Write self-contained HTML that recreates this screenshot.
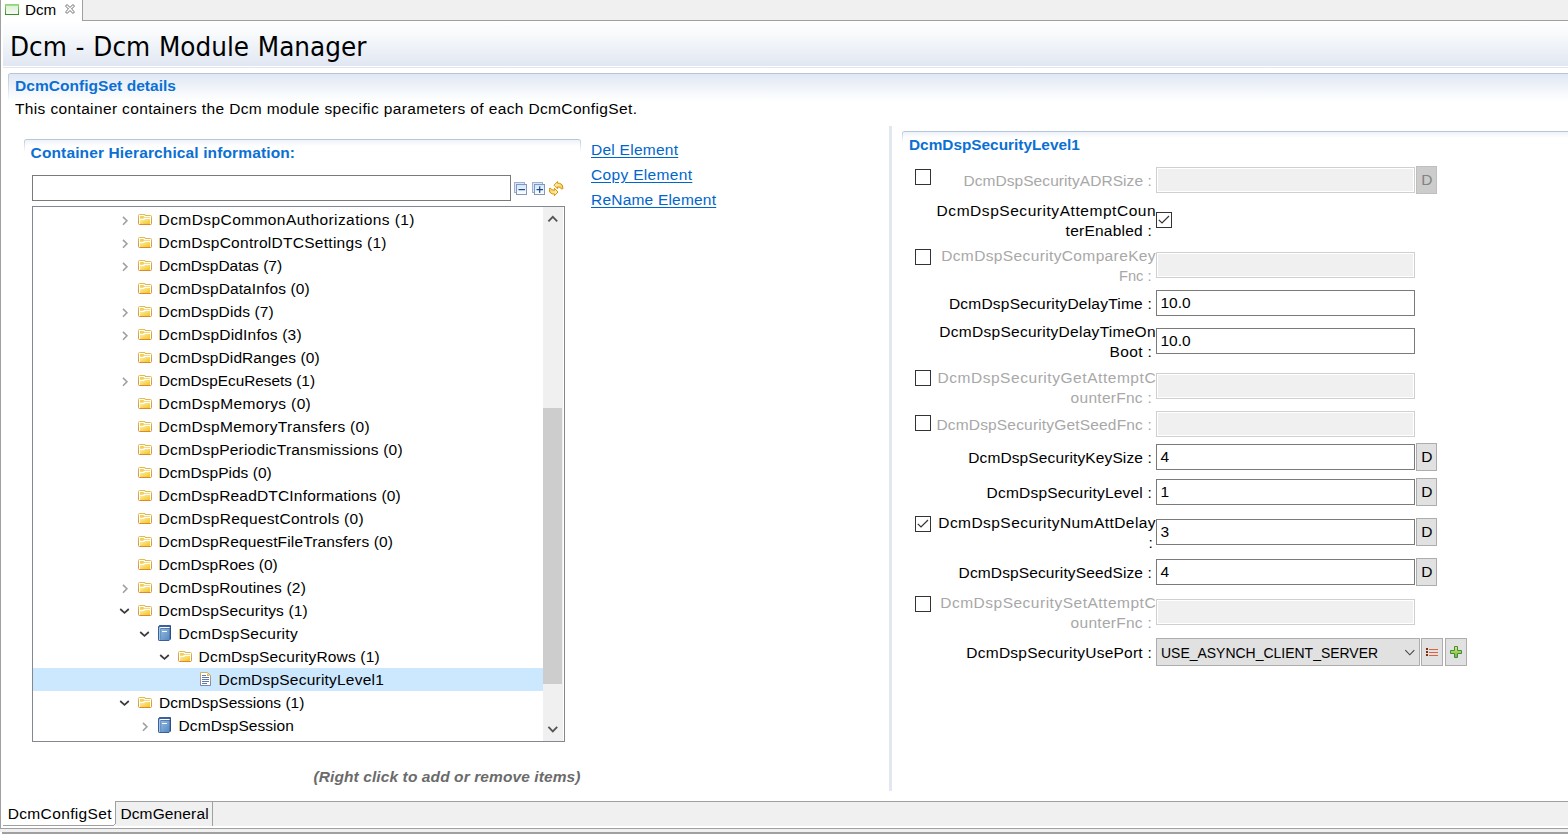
<!DOCTYPE html>
<html><head><meta charset="utf-8"><title>Dcm</title>
<style>
html,body{margin:0;padding:0;}
body{width:1568px;height:834px;position:relative;overflow:hidden;background:#fff;font-family:"Liberation Sans","DejaVu Sans",sans-serif;font-size:15.5px;color:#000;}
.a{position:absolute;}
.t{position:absolute;white-space:pre;line-height:20px;height:20px;}
.b{color:#0a70d4;}
.lk{color:#0066cc;text-decoration:underline;text-underline-offset:2px;}
.in{border:1px solid #7a7a7a;background:#fff;}
.ind{border:1px solid #cfcfcf;background:#f0f0f0;box-shadow:inset 0 0 0 1px #fff;}
#tabbar{left:0;top:0;width:1568px;height:20px;background:#f0f0f0;border-bottom:1px solid #a0a0a0;}
#tab{left:1px;top:0;width:81px;height:21px;background:#fff;border-right:1px solid #a0a0a0;}
#leftedge{left:0;top:0;width:1px;height:829px;background:#a0a0a0;}
#head{left:3px;top:21px;width:1565px;height:45px;background:linear-gradient(#ffffff 0%,#f8fafc 28%,#e1e7f2 100%);}
#headline{left:3px;top:67px;width:1565px;height:1px;background:#dfe6f0;}
#sec1{left:8px;top:73px;width:1570px;height:27px;border-top:1px solid #b3c6dd;border-radius:3px 0 0 0;background:linear-gradient(#b9cadf,rgba(255,255,255,0)) left top/1px 100% no-repeat,linear-gradient(#e1e8f3 0%,#f1f5fa 55%,#ffffff 100%);}
#sec2{left:24px;top:139px;width:557px;height:12px;border-top:1px solid #b5c8df;border-radius:3px 3px 0 0;background:linear-gradient(#b9cadf,rgba(255,255,255,0)) left top/1px 100% no-repeat,linear-gradient(#b9cadf,rgba(255,255,255,0)) right top/1px 100% no-repeat,linear-gradient(#eef2f8 0%,#ffffff 6px);}
#sec3{left:902px;top:131px;width:680px;height:10px;border-top:1px solid #b3c6dd;border-radius:3px 0 0 0;background:linear-gradient(#b9cadf,rgba(255,255,255,0)) left top/1px 100% no-repeat,linear-gradient(#eef2f8 0%,#ffffff 6px);}
#sash{left:889px;top:126px;width:3px;height:665px;background:#e1e8f2;}
#filter{left:32px;top:175px;width:477px;height:24px;}
#tree{left:32px;top:206px;width:531px;height:534px;border:1px solid #828790;background:#fff;}
#sbtrack{left:543px;top:207px;width:20px;height:534px;background:#f0f0f0;}
#sbthumb{left:543px;top:408px;width:19px;height:276px;background:#cdcdcd;}
#btabbar{left:1px;top:801px;width:1567px;height:24px;background:#f0f0f0;border-top:1px solid #a0a0a0;}
#btab1{left:1px;top:801px;width:114px;height:27px;background:#fff;}#btab1r{left:115px;top:802px;width:1px;height:22px;background:#a0a0a0;}#bline{left:0;top:828px;width:1568px;height:1px;background:#a0a0a0;}
#btab1l{left:3px;top:825px;width:111px;height:1px;background:#a0a0a0;}
#btab2r{left:212px;top:802px;width:1px;height:24px;background:#a0a0a0;}
#bot1{left:0;top:829px;width:1568px;height:3px;background:#f0f0f0;}
#bot2{left:2px;top:832px;width:1566px;height:2px;background:#a0a0a0;}
</style></head><body>
<svg width="0" height="0" style="position:absolute">
<defs>
<linearGradient id="fb" x1="0" y1="0" x2="0" y2="1"><stop offset="0" stop-color="#e2bd4e"/><stop offset="1" stop-color="#e0882e"/></linearGradient>
<linearGradient id="ff" x1="0" y1="0" x2="1" y2="1"><stop offset="0" stop-color="#fbeeb0"/><stop offset="1" stop-color="#f2c71c"/></linearGradient>
<linearGradient id="bk" x1="0" y1="0" x2="1" y2="1"><stop offset="0" stop-color="#a6c6e2"/><stop offset="1" stop-color="#4f86c2"/></linearGradient>
<linearGradient id="dg" x1="0" y1="0" x2="0" y2="1"><stop offset="0" stop-color="#cdb264"/><stop offset="1" stop-color="#7a84b0"/></linearGradient>
<linearGradient id="sq" x1="0" y1="0" x2="0" y2="1"><stop offset="0" stop-color="#cfe6ff"/><stop offset="1" stop-color="#ffffff"/></linearGradient>
<linearGradient id="pg" x1="0" y1="0" x2="0" y2="1"><stop offset="0" stop-color="#e6ea72"/><stop offset="1" stop-color="#6cb03c"/></linearGradient>
<linearGradient id="sy" x1="0" y1="0" x2="1" y2="1"><stop offset="0" stop-color="#fffbe0"/><stop offset="1" stop-color="#f3c83c"/></linearGradient>
<linearGradient id="tg" x1="0" y1="0" x2="0" y2="1"><stop offset="0" stop-color="#8fd878"/><stop offset="1" stop-color="#3a8c2c"/></linearGradient>
<linearGradient id="tf" x1="0" y1="0" x2="0" y2="1"><stop offset="0" stop-color="#d9eed2"/><stop offset="1" stop-color="#f7fcf5"/></linearGradient>
<symbol id="folder" viewBox="0 0 14 11">
<path d="M0.5 1.5 Q0.5 0.5 1.5 0.5 H7 V1.5 H12.5 Q13.5 1.5 13.5 2.5 V9.5 Q13.5 10.5 12.5 10.5 H1.5 Q0.5 10.5 0.5 9.5 Z" fill="#fff" stroke="url(#fb)"/>
<path d="M2 2 H5.5 L6.5 3 H12 V3.8 H6.2 L5.2 4.7 H2 Z" fill="#f3cf5c"/>
<path d="M2 6 H6 L7 5 H12 V10 H2 Z" fill="url(#ff)"/>
</symbol>
<symbol id="book" viewBox="0 0 13 16">
<path d="M1.5 0.5 H12.5 V14 L11 15.5 H1.2 Q0.5 15.5 0.5 14.8 V1.5 Z" fill="url(#bk)" stroke="#3b5f9c"/>
<rect x="1" y="0.5" width="11.5" height="1.6" fill="#3b62a2"/>
<rect x="2.2" y="2" width="10" height="1" fill="#fff"/>
<rect x="2.2" y="3" width="10" height="0.8" fill="#4a74b2"/>
<rect x="1" y="3" width="1.4" height="12" fill="#a4c8e4"/>
<rect x="2.4" y="3.8" width="0.7" height="11" fill="#4d7cb8"/>
<rect x="4" y="6" width="5" height="1" fill="#fff"/>
<rect x="11.7" y="1" width="1.1" height="13.2" fill="#2c4a7c"/>
</symbol>
<symbol id="doc" viewBox="0 0 11 14">
<path d="M0.5 0.5 H7.5 L10.5 3.5 V13.5 H0.5 Z" fill="#fff" stroke="url(#dg)"/>
<path d="M7 1 L10 4 H7 Z" fill="#e2b453"/>
<rect x="2" y="3" width="4" height="1" fill="#5f78b4"/>
<rect x="2" y="5" width="7" height="1" fill="#5f78b4"/>
<rect x="2" y="7" width="7" height="1" fill="#5f78b4"/>
<rect x="2" y="9" width="7" height="1" fill="#5f78b4"/>
<rect x="2" y="11" width="5" height="1" fill="#5f78b4"/>
</symbol>
<symbol id="chevR" viewBox="0 0 7 10"><path d="M1 0.9 L4.9 4.8 L1 8.7" fill="none" stroke="#a0a0a0" stroke-width="1.6"/></symbol>
<symbol id="chevD" viewBox="0 0 11 7"><path d="M1.2 1 L5.5 4.9 L9.8 1" fill="none" stroke="#3c3c3c" stroke-width="1.7"/></symbol>
<symbol id="tick" viewBox="0 0 12 10"><path d="M0.8 4.8 L4 8 L11 1" fill="none" stroke="#333" stroke-width="1.2"/></symbol>
<symbol id="selchev" viewBox="0 0 12 8"><path d="M1.3 1.2 L5.8 5.8 L10.3 1.2" fill="none" stroke="#444" stroke-width="1.1"/></symbol>
<symbol id="collapse" viewBox="0 0 13 13">
<rect x="0.5" y="0.5" width="10" height="10" fill="#d6e9fb" stroke="#9db0cf"/>
<rect x="2.5" y="2.5" width="10" height="10" fill="url(#sq)" stroke="#8796b8"/>
<rect x="4.5" y="7" width="6.5" height="1.2" fill="#1b4a8a"/>
</symbol>
<symbol id="expand" viewBox="0 0 13 13">
<rect x="0.5" y="0.5" width="10" height="10" fill="#d6e9fb" stroke="#9db0cf"/>
<rect x="2.5" y="2.5" width="10" height="10" fill="url(#sq)" stroke="#8796b8"/>
<rect x="4.5" y="7" width="6.5" height="1.2" fill="#1b4a8a"/>
<rect x="7.1" y="4.3" width="1.2" height="6.6" fill="#1b4a8a"/>
</symbol>
<symbol id="sync" viewBox="0 0 15 16">
<path id="syA" d="M5 4.2 L8.6 0.5 V2.3 H10.8 Q14 3 14 7.6 L12.4 8 Q12 5.9 8.6 5.9 V7.9 Z" fill="url(#sy)" stroke="#d3940e" stroke-width="1" stroke-linejoin="round"/>
<use href="#syA" transform="rotate(180 7 7.6)"/>
</symbol>
<symbol id="listic" viewBox="0 0 14 11">
<rect x="1" y="1" width="2" height="2" fill="#7a2a14"/><rect x="1" y="4" width="2" height="2" fill="#7a2a14"/><rect x="1" y="7" width="2" height="2" fill="#7a2a14"/>
<rect x="4" y="2" width="9" height="1" fill="#e0623c"/><rect x="4" y="5" width="9" height="1" fill="#e0623c"/><rect x="4" y="8" width="9" height="1" fill="#e0623c"/>
</symbol>
<symbol id="plusic" viewBox="0 0 12 12">
<path d="M4.5 0.5 H7.5 V4.5 H11.5 V7.5 H7.5 V11.5 H4.5 V7.5 H0.5 V4.5 H4.5 Z" fill="url(#pg)" stroke="#3d8f3d"/>
</symbol>
<symbol id="tabic" viewBox="0 0 14 11">
<rect x="0.5" y="0.5" width="13" height="10" fill="url(#tf)" stroke="url(#tg)"/>
<rect x="1" y="1" width="12" height="1" fill="#9fdc8c"/>
</symbol>
<symbol id="closex" viewBox="0 0 11 11">
<path d="M0.6 2.3 L2.3 0.6 L5.5 3.8 L8.7 0.6 L10.4 2.3 L7.2 5.5 L10.4 8.7 L8.7 10.4 L5.5 7.2 L2.3 10.4 L0.6 8.7 L3.8 5.5 Z" fill="#fff" stroke="#5c5c5c" stroke-width="1"/>
</symbol>
</defs></svg>
<div class="a" id="tabbar"></div>
<div class="a" id="tab"></div>
<div class="a" id="head"></div>
<div class="a" id="headline"></div>
<div class="a" id="sec1"></div>
<div class="a" id="sec2"></div>
<div class="a" id="sec3"></div>
<div class="a" id="sash"></div>
<div class="a in" id="filter"></div>
<div class="a" id="tree"></div>
<div class="a" id="sbtrack"></div>
<div class="a" id="sbthumb"></div>
<svg class="a" style="left:5px;top:4px" width="14" height="11"><use href="#tabic"/></svg>
<svg class="a" style="left:65px;top:4px" width="10" height="10"><use href="#closex"/></svg>
<svg class="a" style="left:514px;top:182px" width="13" height="13"><use href="#collapse"/></svg>
<svg class="a" style="left:532px;top:182px" width="13" height="13"><use href="#expand"/></svg>
<svg class="a" style="left:549px;top:181px" width="15" height="16"><use href="#sync"/></svg>
<svg class="a" style="left:547px;top:214px" width="12" height="9"><path d="M1.4 7.4 L5.8 2.8 L10.2 7.4" fill="none" stroke="#555" stroke-width="1.8"/></svg>
<svg class="a" style="left:547px;top:725px" width="12" height="9"><path d="M1.4 1.8 L5.8 6.4 L10.2 1.8" fill="none" stroke="#555" stroke-width="1.8"/></svg>
<svg class="a" style="left:122px;top:215.5px" width="7" height="10"><use href="#chevR"/></svg>
<svg class="a" style="left:138px;top:214px" width="14" height="11"><use href="#folder"/></svg>
<svg class="a" style="left:122px;top:238.5px" width="7" height="10"><use href="#chevR"/></svg>
<svg class="a" style="left:138px;top:237px" width="14" height="11"><use href="#folder"/></svg>
<svg class="a" style="left:122px;top:261.5px" width="7" height="10"><use href="#chevR"/></svg>
<svg class="a" style="left:138px;top:260px" width="14" height="11"><use href="#folder"/></svg>
<svg class="a" style="left:138px;top:283px" width="14" height="11"><use href="#folder"/></svg>
<svg class="a" style="left:122px;top:307.5px" width="7" height="10"><use href="#chevR"/></svg>
<svg class="a" style="left:138px;top:306px" width="14" height="11"><use href="#folder"/></svg>
<svg class="a" style="left:122px;top:330.5px" width="7" height="10"><use href="#chevR"/></svg>
<svg class="a" style="left:138px;top:329px" width="14" height="11"><use href="#folder"/></svg>
<svg class="a" style="left:138px;top:352px" width="14" height="11"><use href="#folder"/></svg>
<svg class="a" style="left:122px;top:376.5px" width="7" height="10"><use href="#chevR"/></svg>
<svg class="a" style="left:138px;top:375px" width="14" height="11"><use href="#folder"/></svg>
<svg class="a" style="left:138px;top:398px" width="14" height="11"><use href="#folder"/></svg>
<svg class="a" style="left:138px;top:421px" width="14" height="11"><use href="#folder"/></svg>
<svg class="a" style="left:138px;top:444px" width="14" height="11"><use href="#folder"/></svg>
<svg class="a" style="left:138px;top:467px" width="14" height="11"><use href="#folder"/></svg>
<svg class="a" style="left:138px;top:490px" width="14" height="11"><use href="#folder"/></svg>
<svg class="a" style="left:138px;top:513px" width="14" height="11"><use href="#folder"/></svg>
<svg class="a" style="left:138px;top:536px" width="14" height="11"><use href="#folder"/></svg>
<svg class="a" style="left:138px;top:559px" width="14" height="11"><use href="#folder"/></svg>
<svg class="a" style="left:122px;top:583.5px" width="7" height="10"><use href="#chevR"/></svg>
<svg class="a" style="left:138px;top:582px" width="14" height="11"><use href="#folder"/></svg>
<svg class="a" style="left:119px;top:608px" width="11" height="7"><use href="#chevD"/></svg>
<svg class="a" style="left:138px;top:605px" width="14" height="11"><use href="#folder"/></svg>
<svg class="a" style="left:139px;top:631px" width="11" height="7"><use href="#chevD"/></svg>
<svg class="a" style="left:158px;top:625px" width="13" height="16"><use href="#book"/></svg>
<svg class="a" style="left:159px;top:654px" width="11" height="7"><use href="#chevD"/></svg>
<svg class="a" style="left:178px;top:651px" width="14" height="11"><use href="#folder"/></svg>
<div class="a" style="left:33px;top:668px;width:510px;height:23px;background:#cce8ff;"></div>
<svg class="a" style="left:200px;top:672px" width="11" height="14"><use href="#doc"/></svg>
<svg class="a" style="left:119px;top:700px" width="11" height="7"><use href="#chevD"/></svg>
<svg class="a" style="left:138px;top:697px" width="14" height="11"><use href="#folder"/></svg>
<svg class="a" style="left:142px;top:721.5px" width="7" height="10"><use href="#chevR"/></svg>
<svg class="a" style="left:158px;top:717px" width="13" height="16"><use href="#book"/></svg>
<div class="a ind" style="left:1156px;top:167px;width:257px;height:24px;"></div>
<div class="a" style="left:1416px;top:166px;width:21px;height:28px;background:#cccccc;border:1px solid #bfbfbf;box-sizing:border-box;"></div>
<div class="a" style="left:915px;top:169px;width:14px;height:14px;border:1px solid #333;background:#fff;"></div>
<div class="a" style="left:1156px;top:212px;width:14px;height:14px;border:1px solid #333;background:#fff;"></div>
<svg class="a" style="left:1158px;top:215px" width="12" height="10"><use href="#tick"/></svg>
<div class="a ind" style="left:1156px;top:252px;width:257px;height:24px;"></div>
<div class="a" style="left:915px;top:249px;width:14px;height:14px;border:1px solid #333;background:#fff;"></div>
<div class="a in" style="left:1156px;top:290px;width:257px;height:24px;"></div>
<div class="a in" style="left:1156px;top:328px;width:257px;height:24px;"></div>
<div class="a ind" style="left:1156px;top:373px;width:257px;height:24px;"></div>
<div class="a" style="left:915px;top:370px;width:14px;height:14px;border:1px solid #333;background:#fff;"></div>
<div class="a ind" style="left:1156px;top:411px;width:257px;height:24px;"></div>
<div class="a" style="left:915px;top:415px;width:14px;height:14px;border:1px solid #333;background:#fff;"></div>
<div class="a in" style="left:1156px;top:444px;width:257px;height:24px;"></div>
<div class="a" style="left:1416px;top:443px;width:21px;height:28px;background:#e1e1e1;border:1px solid #adadad;box-sizing:border-box;"></div>
<div class="a in" style="left:1156px;top:479px;width:257px;height:24px;"></div>
<div class="a" style="left:1416px;top:478px;width:21px;height:28px;background:#e1e1e1;border:1px solid #adadad;box-sizing:border-box;"></div>
<div class="a in" style="left:1156px;top:519px;width:257px;height:24px;"></div>
<div class="a" style="left:1416px;top:518px;width:21px;height:28px;background:#e1e1e1;border:1px solid #adadad;box-sizing:border-box;"></div>
<div class="a" style="left:915px;top:516px;width:14px;height:14px;border:1px solid #333;background:#fff;"></div>
<svg class="a" style="left:917px;top:519px" width="12" height="10"><use href="#tick"/></svg>
<div class="a in" style="left:1156px;top:559px;width:257px;height:24px;"></div>
<div class="a" style="left:1416px;top:558px;width:21px;height:28px;background:#e1e1e1;border:1px solid #adadad;box-sizing:border-box;"></div>
<div class="a ind" style="left:1156px;top:599px;width:257px;height:24px;"></div>
<div class="a" style="left:915px;top:596px;width:14px;height:14px;border:1px solid #333;background:#fff;"></div>
<div class="a" style="left:1156px;top:638px;width:264px;height:28px;background:#e1e1e1;border:1px solid #adadad;box-sizing:border-box;"></div>
<svg class="a" style="left:1404px;top:649px" width="12" height="8"><use href="#selchev"/></svg>
<div class="a" style="left:1421px;top:638px;width:22px;height:28px;background:#e1e1e1;border:1px solid #adadad;box-sizing:border-box;"></div>
<svg class="a" style="left:1425px;top:647px" width="14" height="11"><use href="#listic"/></svg>
<div class="a" style="left:1445px;top:638px;width:22px;height:28px;background:#e1e1e1;border:1px solid #adadad;box-sizing:border-box;"></div>
<svg class="a" style="left:1450px;top:646px" width="12" height="12"><use href="#plusic"/></svg>
<div class="a" id="btabbar"></div>
<div class="a" id="btab1"></div>
<div class="a" id="btab1r"></div>
<div class="a" id="bline"></div>
<svg class="a" style="left:111px;top:822px" width="6" height="5"><path d="M0 3.5 H2.5 L4.5 1.5 V0" fill="none" stroke="#a0a0a0" stroke-width="1"/></svg>
<div class="a" id="btab1l"></div>
<div class="a" id="btab2r"></div>
<div class="a" id="bot1"></div>
<div class="a" id="bot2"></div>
<div class="a" id="leftedge"></div>
<div class="t" style="left:25px;top:0px;transform:scaleX(0.9824);transform-origin:0 0;">Dcm</div>
<div class="t" style="font-family:'DejaVu Sans','Liberation Sans',sans-serif;font-size:26px;word-spacing:0.936px;left:9.6px;top:30px;line-height:34px;height:34px;transform:scaleX(0.953);transform-origin:0 0;">Dcm - Dcm Module Manager</div>
<div class="t b" style="font-weight:bold;letter-spacing:0.042px;left:15px;top:76px;">DcmConfigSet details</div>
<div class="t" style="letter-spacing:0.361px;left:15px;top:99px;">This container containers the Dcm module specific parameters of each DcmConfigSet.</div>
<div class="t b" style="font-weight:bold;letter-spacing:0.126px;left:30.6px;top:143px;">Container Hierarchical information:</div>
<div class="t lk" style="letter-spacing:0.256px;left:591px;top:140px;">Del Element</div>
<div class="t lk" style="letter-spacing:0.331px;left:591px;top:165px;">Copy Element</div>
<div class="t lk" style="letter-spacing:0.206px;left:591px;top:190px;">ReName Element</div>
<div class="t" style="font-weight:bold;font-style:italic;letter-spacing:0.098px;left:313.5px;top:767px;color:#6b6b6b;">(Right click to add or remove items)</div>
<div class="t" style="letter-spacing:0.36px;left:7.7px;top:804px;">DcmConfigSet</div>
<div class="t" style="letter-spacing:0.133px;left:120.4px;top:804px;">DcmGeneral</div>
<div class="t b" style="font-weight:bold;left:908.6px;top:135px;transform:scaleX(0.9912);transform-origin:0 0;">DcmDspSecurityLevel1</div>
<div class="t" style="letter-spacing:0.418px;left:158.6px;top:210px;">DcmDspCommonAuthorizations (1)</div>
<div class="t" style="letter-spacing:0.274px;left:158.6px;top:233px;">DcmDspControlDTCSettings (1)</div>
<div class="t" style="left:158.6px;top:256px;transform:scaleX(0.9994);transform-origin:0 0;">DcmDspDatas (7)</div>
<div class="t" style="letter-spacing:0.11px;left:158.6px;top:279px;">DcmDspDataInfos (0)</div>
<div class="t" style="letter-spacing:0.101px;left:158.6px;top:302px;">DcmDspDids (7)</div>
<div class="t" style="letter-spacing:0.204px;left:158.6px;top:325px;">DcmDspDidInfos (3)</div>
<div class="t" style="letter-spacing:0.091px;left:158.6px;top:348px;">DcmDspDidRanges (0)</div>
<div class="t" style="left:158.6px;top:371px;transform:scaleX(0.9897);transform-origin:0 0;">DcmDspEcuResets (1)</div>
<div class="t" style="letter-spacing:0.362px;left:158.6px;top:394px;">DcmDspMemorys (0)</div>
<div class="t" style="letter-spacing:0.315px;left:158.6px;top:417px;">DcmDspMemoryTransfers (0)</div>
<div class="t" style="letter-spacing:0.199px;left:158.6px;top:440px;">DcmDspPeriodicTransmissions (0)</div>
<div class="t" style="letter-spacing:0.021px;left:158.6px;top:463px;">DcmDspPids (0)</div>
<div class="t" style="letter-spacing:0.187px;left:158.6px;top:486px;">DcmDspReadDTCInformations (0)</div>
<div class="t" style="letter-spacing:0.286px;left:158.6px;top:509px;">DcmDspRequestControls (0)</div>
<div class="t" style="letter-spacing:0.143px;left:158.6px;top:532px;">DcmDspRequestFileTransfers (0)</div>
<div class="t" style="letter-spacing:0.026px;left:158.6px;top:555px;">DcmDspRoes (0)</div>
<div class="t" style="letter-spacing:0.197px;left:158.6px;top:578px;">DcmDspRoutines (2)</div>
<div class="t" style="letter-spacing:0.149px;left:158.6px;top:601px;">DcmDspSecuritys (1)</div>
<div class="t" style="letter-spacing:0.283px;left:178.6px;top:624px;">DcmDspSecurity</div>
<div class="t" style="letter-spacing:0.17px;left:198.6px;top:647px;">DcmDspSecurityRows (1)</div>
<div class="t" style="letter-spacing:0.216px;left:218.6px;top:670px;">DcmDspSecurityLevel1</div>
<div class="t" style="left:158.6px;top:693px;transform:scaleX(0.9982);transform-origin:0 0;">DcmDspSessions (1)</div>
<div class="t" style="letter-spacing:0.061px;left:178.6px;top:716px;">DcmDspSession</div>
<div class="t" style="letter-spacing:0.068px;left:963.4px;top:171px;color:#a8a8a8;">DcmDspSecurityADRSize :</div>
<div class="t" style="letter-spacing:0.547px;left:936.6px;top:201px;">DcmDspSecurityAttemptCoun</div>
<div class="t" style="letter-spacing:0.237px;left:1065.6px;top:221px;">terEnabled :</div>
<div class="t" style="letter-spacing:0.371px;left:941.2px;top:246px;color:#a8a8a8;">DcmDspSecurityCompareKey</div>
<div class="t" style="left:1119.2px;top:266px;transform:scaleX(0.9462);transform-origin:0 0;color:#a8a8a8;">Fnc :</div>
<div class="t" style="letter-spacing:0.224px;left:948.9px;top:294px;">DcmDspSecurityDelayTime :</div>
<div class="t" style="letter-spacing:0.279px;left:939.3px;top:322px;">DcmDspSecurityDelayTimeOn</div>
<div class="t" style="letter-spacing:0.34px;left:1109.6px;top:342px;">Boot :</div>
<div class="t" style="letter-spacing:0.55px;left:937.4px;top:368px;color:#a8a8a8;">DcmDspSecurityGetAttemptC</div>
<div class="t" style="letter-spacing:0.279px;left:1070.6px;top:388px;color:#a8a8a8;">ounterFnc :</div>
<div class="t" style="letter-spacing:0.174px;left:936.4px;top:415px;color:#a8a8a8;">DcmDspSecurityGetSeedFnc :</div>
<div class="t" style="letter-spacing:0.123px;left:968.2px;top:448px;">DcmDspSecurityKeySize :</div>
<div class="t" style="letter-spacing:0.206px;left:986.6px;top:483px;">DcmDspSecurityLevel :</div>
<div class="t" style="letter-spacing:0.441px;left:938.3px;top:513px;">DcmDspSecurityNumAttDelay</div>
<div class="t" style="left:1148.5px;top:533px;">:</div>
<div class="t" style="letter-spacing:0.123px;left:958.6px;top:563px;">DcmDspSecuritySeedSize :</div>
<div class="t" style="letter-spacing:0.505px;left:940.2px;top:593px;color:#a8a8a8;">DcmDspSecuritySetAttemptC</div>
<div class="t" style="letter-spacing:0.279px;left:1070.6px;top:613px;color:#a8a8a8;">ounterFnc :</div>
<div class="t" style="letter-spacing:0.249px;left:966.3px;top:643px;">DcmDspSecurityUsePort :</div>
<div class="t" style="left:1421.3px;top:170px;color:#838383;">D</div>
<div class="t" style="left:1160.5px;top:293px;">10.0</div>
<div class="t" style="left:1160.5px;top:331px;">10.0</div>
<div class="t" style="left:1160.5px;top:447px;">4</div>
<div class="t" style="left:1421.3px;top:447px;">D</div>
<div class="t" style="left:1160.5px;top:482px;">1</div>
<div class="t" style="left:1421.3px;top:482px;">D</div>
<div class="t" style="left:1160.5px;top:522px;">3</div>
<div class="t" style="left:1421.3px;top:522px;">D</div>
<div class="t" style="left:1160.5px;top:562px;">4</div>
<div class="t" style="left:1421.3px;top:562px;">D</div>
<div class="t" style="left:1160.8px;top:643px;transform:scaleX(0.9011);transform-origin:0 0;">USE_ASYNCH_CLIENT_SERVER</div>
</body></html>
